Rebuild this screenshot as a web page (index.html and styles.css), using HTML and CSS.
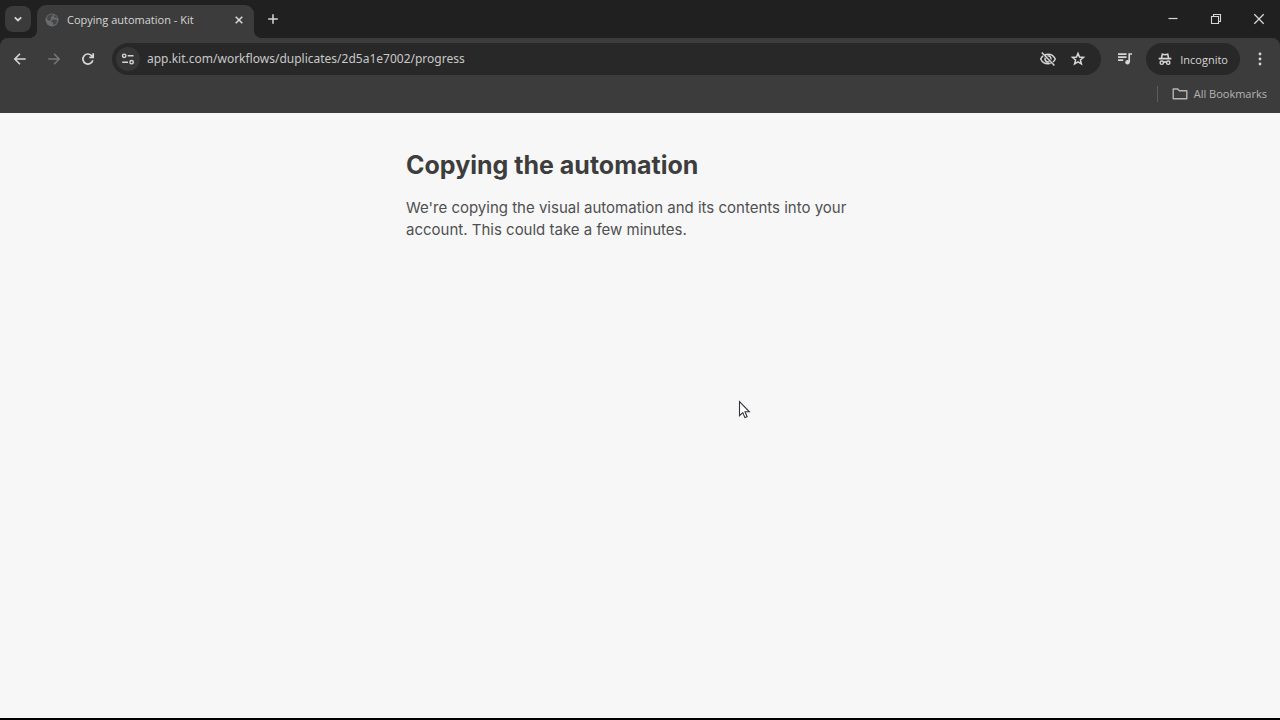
FILE: index.html
```html
<!DOCTYPE html>
<html lang="en">
<head>
<meta charset="utf-8">
<meta name="viewport" content="width=device-width, initial-scale=1">
<title>Copying automation - Kit</title>
<link rel="stylesheet" href="styles.css">
</head>
<body>
<div class="window">
  <header class="chrome">
    <div class="tab-strip">
      <button class="tab-search" type="button" aria-label="Search tabs">
        <svg class="icon" width="10" height="10" viewBox="0 0 10 10"><path d="M1.8 3.3 5 6.5l3.2-3.2" stroke-width="1.8"/></svg>
      </button>
      <div class="tab">
        <svg class="favicon" width="14" height="14" viewBox="0 0 14 14"><circle cx="7" cy="7" r="6.5" fill="#696b6d"/><path d="M2 4.5 4 2l4-.8-.5 2-2 1 .8 1.5L4.5 8 2.2 6.5zM6.8 7l2.5-.7 2.9 1.3-1 2.9-2.7 1.7-.5-2.4L6.4 9z" fill="#444648"/><path d="m9.3 1.8 2 1.6.9 2-2.2-.6-1-1.4z" fill="#444648"/></svg>
        <span class="tab-title">Copying automation - Kit</span>
        <button class="tab-close" type="button" aria-label="Close tab">
          <svg class="icon" width="10" height="10" viewBox="0 0 10 10"><path d="m1.7 1.7 6.6 6.6m0-6.6L1.7 8.3" stroke-width="1.6"/></svg>
        </button>
      </div>
      <button class="new-tab" type="button" aria-label="New tab">
        <svg class="icon" width="12" height="12" viewBox="0 0 12 12"><path d="M6 1.2v9.6M1.2 6h9.6" stroke-width="1.5"/></svg>
      </button>
      <div class="window-controls">
        <button class="window-button" type="button" aria-label="Minimize">
          <svg class="icon" width="12" height="12" viewBox="0 0 12 12"><path d="M1.5 5.5h9" stroke-width="1.2"/></svg>
        </button>
        <button class="window-button" type="button" aria-label="Restore">
          <svg class="icon" width="12" height="12" viewBox="0 0 12 12"><path d="M1.5 3.5h7v7h-7zM3.5 3.5v-2h7v7h-2" stroke-width="1.1"/></svg>
        </button>
        <button class="window-button" type="button" aria-label="Close">
          <svg class="icon" width="12" height="12" viewBox="0 0 12 12"><path d="m1.3 1.3 9.4 9.4m0-9.4-9.4 9.4" stroke-width="1.3"/></svg>
        </button>
      </div>
    </div>
    <div class="toolbar">
      <nav class="navigation" aria-label="Navigation">
        <button class="tool" type="button" aria-label="Back">
          <svg class="icon" width="14" height="14" viewBox="0 0 14 14"><path d="M12.7 7H2M7 1.8 1.8 7 7 12.2" stroke-width="1.6"/></svg>
        </button>
        <button class="tool tool-disabled" type="button" aria-label="Forward" disabled>
          <svg class="icon" width="14" height="14" viewBox="0 0 14 14"><path d="M1.3 7H12M7 1.8 12.2 7 7 12.2" stroke-width="1.5"/></svg>
        </button>
        <button class="tool" type="button" aria-label="Reload">
          <svg class="icon" width="14" height="14" viewBox="0 0 14 14"><path d="M11.8 8.2A5 5 0 1 1 11 4.1l1 1.1M12.2 1.3v4H8.3" stroke-width="1.7"/></svg>
        </button>
      </nav>
      <div class="address-bar">
        <button class="site-info" type="button" aria-label="View site information">
          <svg class="icon" width="14" height="14" viewBox="0 0 14 14"><circle cx="3.2" cy="3.8" r="1.7"/><path d="M6.7 3.8h5.8M1.2 10.2H7"/><circle cx="10.6" cy="10.2" r="1.7"/></svg>
        </button>
        <input class="url" type="text" aria-label="Address" value="app.kit.com/workflows/duplicates/2d5a1e7002/progress">
        <button class="address-action" type="button" aria-label="Third-party cookies blocked">
          <svg class="icon" width="18" height="16" viewBox="0 0 18 16"><path d="M6.1 3.8A8 8 0 0 1 9 3.2c3.4 0 6 2 7.3 4.8a8 8 0 0 1-2.3 3M11.6 12.4A8 8 0 0 1 9 12.8c-3.4 0-6-2-7.3-4.8a8 8 0 0 1 2.4-3.1M2.8 1.5l12.6 13M8.5 4.9A3.1 3.1 0 0 1 12 8.5M6.2 6.8a3.1 3.1 0 0 0 4 4" stroke-width="1.5"/></svg>
        </button>
        <button class="address-action" type="button" aria-label="Bookmark this tab">
          <svg class="icon" width="16" height="16" viewBox="0 0 16 16"><path d="m8 2.4 1.5 3.7 4 .3-3.1 2.6 1 3.9L8 10.8l-3.4 2.1 1-3.9-3.1-2.6 4-.3z" stroke-width="1.5"/></svg>
        </button>
      </div>
      <button class="tool media" type="button" aria-label="Media controls">
        <svg class="icon" width="16" height="14" viewBox="0 0 16 14"><path d="M1 2.2h8.5M1 5.2h8.5M1 8.2h5.2M12.2 10V2h2.8" stroke-width="1.7"/><circle cx="10.5" cy="10.2" r="2.2" fill="currentColor" stroke="none"/></svg>
      </button>
      <button class="incognito" type="button">
        <svg class="icon" width="14" height="14" viewBox="0 0 14 14"><path d="M.7 6.6h12.6M3.4 6.4l.9-4.2L7 2.7l2.7-.5.9 4.2M5.6 10.3q1.4-.8 2.8 0" stroke-width="1.6"/><circle cx="3.8" cy="10.7" r="1.7"/><circle cx="10.2" cy="10.7" r="1.7"/></svg>
        <span>Incognito</span>
      </button>
      <button class="tool menu" type="button" aria-label="Menu">
        <svg width="4" height="14" viewBox="0 0 4 14" fill="currentColor"><circle cx="2" cy="2" r="1.4"/><circle cx="2" cy="7" r="1.4"/><circle cx="2" cy="12" r="1.4"/></svg>
      </button>
    </div>
    <div class="bookmarks">
      <button class="all-bookmarks" type="button">
        <svg class="icon" width="16" height="14" viewBox="0 0 16 14"><path d="M1.2 2h4.6l1.5 1.7h7.5v8.1H1.2z" stroke-width="1.4" stroke-linejoin="round"/></svg>
        <span>All Bookmarks</span>
      </button>
    </div>
  </header>
  <main class="page">
    <section class="notice">
      <h1 class="notice-title">Copying the automation</h1>
      <p class="notice-text">We're copying the visual automation and its contents into your account. This could take a few minutes.</p>
    </section>
  </main>
</div>
<svg class="cursor" width="13" height="20" viewBox="0 0 13 20"><path d="M1.5 1.5v14.2l3.3-3.1 2.1 5 2.2-.9-2.1-4.9h4.4z" fill="#fff" stroke="#34343c" stroke-width="1.1"/></svg>
</body>
</html>
```
FILE: styles.css
```css
* {
  box-sizing: border-box;
}

body {
  margin: 0;
  background: #f7f7f7;
  font-family: Inter, "Liberation Sans", sans-serif;
}

button {
  display: flex;
  align-items: center;
  justify-content: center;
  flex: none;
  margin: 0;
  padding: 0;
  border: 0;
  background: none;
  color: inherit;
  font: inherit;
}

svg {
  display: block;
  flex: none;
}

.icon {
  fill: none;
  stroke: currentColor;
  stroke-width: 1.4;
}

.window {
  display: flex;
  flex-direction: column;
  min-height: 100vh;
  border-bottom: 2px solid #000;
}

.chrome {
  background: #202020;
  color: #d6d6d6;
  font-family: "Open Sans", "Noto Sans", sans-serif;
}

.tab-strip {
  display: flex;
  align-items: center;
  height: 38px;
  padding-left: 5px;
}

.tab-search {
  width: 26px;
  height: 26px;
  border-radius: 8px;
  background: #3b3b3b;
}

.tab {
  position: relative;
  display: flex;
  align-items: center;
  align-self: flex-end;
  width: 217px;
  height: 33px;
  margin-left: 6px;
  padding: 0 7px 4px 8px;
  border-radius: 9px 9px 0 0;
  background: #3c3c3c;
}

.tab::before,
.tab::after {
  content: "";
  position: absolute;
  bottom: 0;
  width: 8px;
  height: 8px;
}

.tab::before {
  right: 100%;
  background: radial-gradient(circle at 0 0, transparent 8px, #3c3c3c 8px);
}

.tab::after {
  left: 100%;
  background: radial-gradient(circle at 100% 0, transparent 8px, #3c3c3c 8px);
}

.tab-title {
  flex: 1;
  margin-left: 8px;
  font-size: 11px;
  line-height: 16px;
  white-space: nowrap;
}

.tab-close {
  width: 16px;
  height: 16px;
}

.new-tab {
  width: 24px;
  height: 24px;
  margin-left: 7px;
}

.window-controls {
  display: flex;
  margin-left: auto;
}

.window-button {
  width: 43px;
  height: 38px;
}

.toolbar {
  display: flex;
  align-items: center;
  height: 42px;
  padding: 0 8px;
  border-radius: 8px 8px 0 0;
  background: #3c3c3c;
}

.navigation {
  display: flex;
  gap: 10px;
}

.tool {
  width: 24px;
  height: 24px;
}

.tool-disabled {
  color: #777;
}

.address-bar {
  display: flex;
  flex: 1;
  align-items: center;
  height: 32px;
  margin-left: 12px;
  padding: 0 8px 0 4px;
  border-radius: 16px;
  background: #282828;
}

.site-info {
  width: 24px;
  height: 24px;
  border-radius: 12px;
  background: #363636;
}

.url {
  flex: 1;
  min-width: 0;
  margin-left: 7px;
  padding: 0;
  border: 0;
  outline: 0;
  background: none;
  color: #c8c8c8;
  font: 12px/18px "Noto Sans", "Open Sans", sans-serif;
}

.address-action {
  width: 30px;
  height: 24px;
}

.media {
  margin-left: 12px;
}

.incognito {
  gap: 8px;
  height: 32px;
  margin-left: 9px;
  padding: 0 12px;
  border-radius: 16px;
  background: #282828;
  font-size: 11px;
}

.menu {
  margin-left: 8px;
}

.bookmarks {
  display: flex;
  align-items: center;
  justify-content: flex-end;
  height: 33px;
  padding: 0 13px 6px;
  background: #3c3c3c;
}

.all-bookmarks {
  gap: 6px;
  padding-left: 14px;
  border-left: 1px solid #5c5c5c;
  color: #b4b4b4;
  font-size: 11px;
  line-height: 16px;
}

.page {
  flex: 1;
  padding: 36px 24px;
}

.notice {
  max-width: 468px;
  margin: 0 auto;
}

.notice-title {
  margin: 0;
  color: #3d3d3d;
  font-size: 25px;
  font-weight: 700;
  line-height: 32px;
}

.notice-text {
  margin: 16px 0 0;
  color: #505050;
  font-size: 15px;
  line-height: 22px;
}

.cursor {
  position: absolute;
  top: 400px;
  left: 738px;
}
```
